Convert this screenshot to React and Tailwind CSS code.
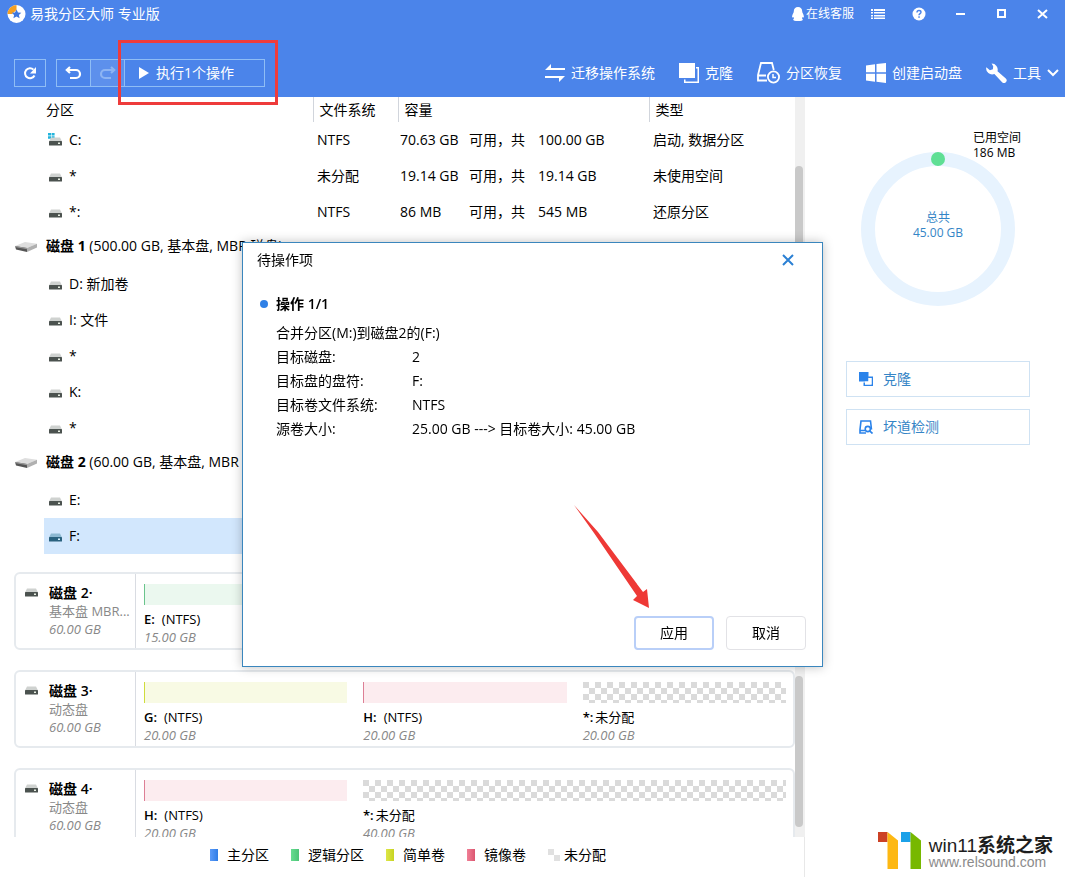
import { useState } from 'react'

const partitions = [
    { id: 'c', name: 'C:', system: true, fs: 'NTFS', free: '70.63 GB', total: '100.00 GB', type: '启动, 数据分区' },
    { id: 'u1', name: '*', fs: '未分配', free: '19.14 GB', total: '19.14 GB', type: '未使用空间' },
    { id: 'r1', name: '*:', fs: 'NTFS', free: '86 MB', total: '545 MB', type: '还原分区' },
    { id: 'disk1', disk: '磁盘 1', info: '(500.00 GB, 基本盘, MBR 磁盘)' },
    { id: 'd', name: 'D: 新加卷' },
    { id: 'i', name: 'I: 文件' },
    { id: 'u2', name: '*' },
    { id: 'k', name: 'K:' },
    { id: 'u3', name: '*' },
    { id: 'disk2', disk: '磁盘 2', info: '(60.00 GB, 基本盘, MBR 磁盘)' },
    { id: 'e', name: 'E:' },
    { id: 'f', name: 'F:' },
]

const disks = [
    {
        name: '磁盘 2·',
        kind: '基本盘 MBR...',
        size: '60.00 GB',
        parts: [
            { name: 'E:', label: '(NTFS)', size: '15.00 GB', grow: 15, tone: 'green' },
            { name: 'F:', label: '(NTFS)', size: '45.00 GB', grow: 45, tone: 'green' },
        ],
    },
    {
        name: '磁盘 3·',
        kind: '动态盘',
        size: '60.00 GB',
        parts: [
            { name: 'G:', label: '(NTFS)', size: '20.00 GB', grow: 20, tone: 'lime' },
            { name: 'H:', label: '(NTFS)', size: '20.00 GB', grow: 20, tone: 'pink' },
            { name: '*:', label: '未分配', size: '20.00 GB', grow: 20, tone: 'none' },
        ],
    },
    {
        name: '磁盘 4·',
        kind: '动态盘',
        size: '60.00 GB',
        parts: [
            { name: 'H:', label: '(NTFS)', size: '20.00 GB', grow: 203, tone: 'pink' },
            { name: '*:', label: '未分配', size: '40.00 GB', grow: 423, tone: 'none' },
        ],
    },
]

const tones = {
    green: 'border-l border-[#6ac48c] bg-[#ebf8ef]',
    lime: 'border-l border-[#cfdc3c] bg-[#f8fae4]',
    pink: 'border-l border-[#dd7f95] bg-[#fcecef]',
    none: 'bg-[repeating-conic-gradient(#ffffff_0_25%,#dadada_0_50%)] bg-size-[12px_12px]',
}

const legend = [
    { label: '主分区', swatch: 'w-2 bg-linear-to-r from-[#5b9bf8] to-[#2f7de6]' },
    { label: '逻辑分区', swatch: 'w-2 bg-linear-to-r from-[#66dc90] to-[#4cc477]' },
    { label: '简单卷', swatch: 'w-2 bg-linear-to-r from-[#dde646] to-[#c7d420]' },
    { label: '镜像卷', swatch: 'w-2 bg-linear-to-r from-[#f07f96] to-[#db5570]' },
]

const details = [
    ['目标磁盘:', '2'],
    ['目标盘的盘符:', 'F:'],
    ['目标卷文件系统:', 'NTFS'],
    ['源卷大小:', '25.00 GB ---> 目标卷大小: 45.00 GB'],
]

function DriveIcon({ system, selected }) {
    return (
        <svg width="15" height="14" viewBox="0 0 15 14" className="shrink-0">
            {system && (
                <path d="M0 0h3v2.6H0zM3.6 0h3v2.6h-3zM0 3.2h3v2.6H0zM3.6 3.2h3v2.6h-3z" fill="#22b4dc" />
            )}
            <path d="M3 4.5h9l2 4H1z" fill={selected ? '#8db9d2' : '#cfd2d0'} />
            <rect x="1" y="8" width="13" height="4.5" rx="0.6" fill={selected ? '#2a627f' : '#4b524f'} />
            <rect x="10" y="9.5" width="2" height="1.5" fill={selected ? '#d8f2ff' : '#e9f0e4'} />
        </svg>
    )
}

function DiskIcon() {
    return (
        <svg width="22" height="14" viewBox="0 0 22 14" className="shrink-0">
            <path d="M0 7 10 3l12 1.800L12 9z" fill="#dedede" />
            <path d="M0 7l12 2v4L1 10.500z" fill="#555" />
            <path d="M12 9l10-4.200V8.500L12 13z" fill="#b0b0b0" />
            <path d="M0 7l12 2v1.200L0 8z" fill="#9a9a9a" />
        </svg>
    )
}

function ToolButton({ icon, children, chevron }) {
    return (
        <button type="button" className="flex items-center gap-1.5 whitespace-nowrap text-sm text-white">
            {icon}
            <span>{children}</span>
            {chevron && (
                <svg width="12" height="8" viewBox="0 0 12 8" fill="none" stroke="currentColor" strokeWidth="2">
                    <path d="M1 1l5 5 5-5" />
                </svg>
            )}
        </button>
    )
}

function Header() {
    return (
        <header className="flex h-[97px] shrink-0 flex-col bg-[#4b84ea] text-white">
            {/* Title bar */}
            <div className="flex h-7 items-center justify-between pl-[7px] pr-4">
                <h1 className="flex items-center gap-1 text-sm">
                    <svg width="19" height="18" viewBox="0 0 19 18">
                        <circle cx="9.5" cy="9" r="9" fill="#fff" />
                        <path d="M0.5 9A9 9 0 0 1 9.5 0v5L5 9z" fill="#f6a021" />
                        <path
                            d="M9.5 4.5l1.5 2.9 3.3.4-2.4 2.2.7 3.3-3.1-1.7-3.1 1.7.7-3.3-2.4-2.2 3.3-.4z"
                            fill="#3f78e0"
                        />
                    </svg>
                    易我分区大师 专业版
                </h1>
                <div className="flex items-center">
                    <button type="button" className="mr-[17px] flex items-center gap-0.5 text-xs">
                        <svg width="12" height="14" viewBox="0 0 12 14" fill="currentColor">
                            <path d="M6 0C3.400 0 1.800 1.900 1.800 4.200c0 .8-.1 1.200-.6 2C.500 7.600 0 8.800.1 10c.1.700.6.700 1.300.1L2 11.500c-.500.300-.8.600-.8 1C1.200 13.600 3 14 6 14s4.800-.4 4.800-1.500c0-.4-.3-.7-.8-1l.6-1.400c.7.600 1.200.6 1.300-.1.1-1.200-.4-2.400-1.100-3.800-.5-.8-.6-1.200-.6-2C10.200 1.900 8.600 0 6 0z" />
                        </svg>
                        在线客服
                    </button>
                    <div className="flex items-center gap-[27px]">
                        <button type="button" aria-label="菜单">
                            <svg width="14" height="14" viewBox="0 0 14 14" fill="currentColor">
                                <path d="M0 2h2v2H0zM3 2h11v2H3zM0 5h2v1.500H0zM3 5h11v1.500H3zM0 8h2v1.500H0zM3 8h11v1.500H3zM0 10.500h2v1.500H0zM3 10.500h11v1.500H3z" />
                            </svg>
                        </button>
                        <button type="button" aria-label="帮助">
                            <svg width="14" height="14" viewBox="0 0 14 14">
                                <circle cx="7" cy="7" r="6.500" fill="#fff" />
                                <path
                                    d="M5 5.500C5 4.200 5.900 3.500 7 3.500s2 .7 2 1.700C9 6.600 7 6.600 7 8.200"
                                    fill="none"
                                    stroke="#4b84ea"
                                    strokeWidth="1.400"
                                />
                                <rect x="6.300" y="9.300" width="1.500" height="1.500" fill="#4b84ea" />
                            </svg>
                        </button>
                        <button type="button" aria-label="最小化">
                            <svg width="14" height="14" viewBox="0 0 14 14" fill="currentColor">
                                <rect x="3" y="6" width="9" height="2" />
                            </svg>
                        </button>
                        <button type="button" aria-label="最大化">
                            <svg width="14" height="14" viewBox="0 0 14 14" fill="none" stroke="currentColor" strokeWidth="2">
                                <rect x="4" y="3" width="7" height="7" />
                            </svg>
                        </button>
                        <button type="button" aria-label="关闭">
                            <svg width="14" height="14" viewBox="0 0 14 14" stroke="currentColor" strokeWidth="2">
                                <path d="M3 3l9 8M12 3l-9 8" />
                            </svg>
                        </button>
                    </div>
                </div>
            </div>

            {/* Toolbar */}
            <div className="mt-[31px] flex items-center justify-between pl-3.5 pr-1.5">
                <div className="flex items-center gap-2.5">
                    <button
                        type="button"
                        aria-label="刷新"
                        className="flex h-7 w-8 items-center justify-center border border-[#8fbdf5]"
                    >
                        <svg width="14" height="14" viewBox="0 0 14 14" fill="none" stroke="currentColor" strokeWidth="2">
                            <path d="M11.500 9.500A5 5 0 1 1 10.500 3.600" />
                            <path d="M13 1v6.500H7z" fill="currentColor" stroke="none" />
                        </svg>
                    </button>
                    <div className="relative flex h-7 border border-[#8fbdf5]">
                        <button
                            type="button"
                            aria-label="撤销"
                            className="flex w-[34px] items-center justify-center border-r border-[#8fbdf5]"
                        >
                            <svg width="17" height="14" viewBox="0 0 17 14" fill="none" stroke="currentColor" strokeWidth="2.200">
                                <path d="M5 1 1.800 4 5 7M2 4h9a4 4 0 0 1 0 8H5" />
                            </svg>
                        </button>
                        <button
                            type="button"
                            aria-label="重做"
                            disabled
                            className="flex w-[34px] items-center justify-center border-r border-[#8fbdf5] bg-white/10 text-[#8db4f3]"
                        >
                            <svg width="17" height="14" viewBox="0 0 17 14" fill="none" stroke="currentColor" strokeWidth="2.200">
                                <path d="M12 1l3.200 3L12 7M15 4H6a4 4 0 0 0 0 8h6" />
                            </svg>
                        </button>
                        <button type="button" className="flex w-[139px] items-center gap-[7px] whitespace-nowrap pl-3.5 text-sm">
                            <svg width="10" height="12" viewBox="0 0 10 12" fill="currentColor">
                                <path d="M0 0l10 6-10 6z" />
                            </svg>
                            执行1个操作
                        </button>
                        <div className="pointer-events-none absolute -right-3.5 -top-5 h-[65px] w-[160px] border-3 border-[#ee3b3b]" />
                    </div>
                </div>

                <div className="flex items-center gap-6">
                    <ToolButton
                        icon={
                            <svg width="20" height="20" viewBox="0 0 20 20" fill="currentColor">
                                <path d="M0 7 6 1v4h14v2zM20 13l-6 6v-4H0v-2z" />
                            </svg>
                        }
                    >
                        迁移操作系统
                    </ToolButton>
                    <ToolButton
                        icon={
                            <svg width="20" height="20" viewBox="0 0 20 20" fill="currentColor">
                                <path d="M0 0h16v15H0z" />
                                <path d="M17 4h3v16H5v-3.500h1.500v2H18.500V5.500H17z" />
                            </svg>
                        }
                    >
                        克隆
                    </ToolButton>
                    <ToolButton
                        icon={
                            <svg width="23" height="22" viewBox="0 0 23 22" fill="none" stroke="currentColor" strokeWidth="1.800">
                                <path d="M10 18.500H1V13L4 1h11l1.800 7M1 13.500h8" />
                                <circle cx="16.500" cy="15" r="5.600" />
                                <path d="M16 12v3.500h3" strokeWidth="1.500" />
                            </svg>
                        }
                    >
                        分区恢复
                    </ToolButton>
                    <ToolButton
                        icon={
                            <svg width="20" height="20" viewBox="0 0 20 20" fill="currentColor">
                                <path d="M0 2.500 9 1.300v8H0zM10.500 1.100 20 0v9.300h-9.500zM0 10.700h9v8l-9-1.200zM10.500 10.700H20V20l-9.500-1.200z" />
                            </svg>
                        }
                    >
                        创建启动盘
                    </ToolButton>
                    <ToolButton
                        chevron
                        icon={
                            <svg width="21" height="20" viewBox="0 0 21 20" fill="currentColor">
                                <path d="M5.600.6a6 6 0 0 1 5.900 7.600l8.300 7.200a2.600 2.600 0 0 1-3.700 3.800L8.400 11A6 6 0 0 1 .3 4.200l3.600 3 3-1L7.200 3.200z" />
                            </svg>
                        }
                    >
                        工具
                    </ToolButton>
                </div>
            </div>
        </header>
    )
}

function PartitionTable({ selected, onSelect }) {
    return (
        <section className="flex min-h-0 shrink-0 overflow-hidden">
            <table className="min-w-0 flex-1 table-fixed border-collapse text-left text-sm">
                <colgroup>
                    <col className="w-11" />
                    <col />
                    <col className="w-[85px]" />
                    <col className="w-[251px]" />
                    <col className="w-[146px]" />
                </colgroup>
                <thead>
                    <tr className="h-[25px]">
                        <th />
                        <th className="pl-0.5 font-normal">分区</th>
                        <th className="border-l border-gray-300 pl-1.5 font-normal">文件系统</th>
                        <th className="border-l border-gray-300 pl-1.5 font-normal">容量</th>
                        <th className="border-l border-gray-300 pl-1.5 font-normal">类型</th>
                    </tr>
                </thead>
                <tbody>
                    {partitions.map((p) =>
                        p.disk ? (
                            <tr key={p.id} className="h-9">
                                <td className="pb-1 pl-[15px]">
                                    <DiskIcon />
                                </td>
                                <td colSpan={4} className="whitespace-nowrap pb-1 pl-0.5">
                                    <b>{p.disk}</b> {p.info}
                                </td>
                            </tr>
                        ) : (
                            <tr key={p.id} className="h-9" onClick={() => onSelect(p.id)}>
                                <td />
                                <td className={selected === p.id ? 'bg-[#d2e7fd]' : ''}>
                                    <div className="flex items-center gap-1.5 pl-1">
                                        <DriveIcon system={p.system} selected={selected === p.id} />
                                        {p.name}
                                    </div>
                                </td>
                                <td className={`pl-1 ${selected === p.id ? 'bg-[#d2e7fd]' : ''}`}>{p.fs}</td>
                                <td className={selected === p.id ? 'bg-[#d2e7fd]' : ''}>
                                    {p.free && (
                                        <div className="flex pl-0.5">
                                            <span className="w-[69px]">{p.free}</span>
                                            <span className="w-[69px]">可用，共</span>
                                            <span>{p.total}</span>
                                        </div>
                                    )}
                                </td>
                                <td className={`pl-1 ${selected === p.id ? 'bg-[#d2e7fd]' : ''}`}>{p.type}</td>
                            </tr>
                        )
                    )}
                </tbody>
            </table>
            <div className="w-2.5 bg-[#f0f0f0] pt-[69px]">
                <div className="h-[300px] w-2 rounded-full bg-[#c9c9c9]" />
            </div>
        </section>
    )
}

function DiskMap() {
    return (
        <section className="flex min-h-0 flex-1 overflow-hidden">
            <div className="flex min-w-0 flex-1 flex-col gap-5 pl-3.5 pt-[18px]">
                {disks.map((d) => (
                    <div key={d.name} className="flex h-[78px] shrink-0 rounded-md border-2 border-[#e6eaee]">
                        <div className="flex w-[120px] shrink-0 border-r border-[#d9dce2] pl-2 pt-2.5">
                            <DriveIcon />
                            <div className="ml-2.5 whitespace-nowrap text-[13px] leading-[18px] text-[#888]">
                                <p className="text-sm leading-[18px] text-black">
                                    <b>{d.name.slice(0, 2)}</b> <span className="font-semibold">{d.name.slice(3)}</span>
                                </p>
                                <p>{d.kind}</p>
                                <p className="italic">{d.size}</p>
                            </div>
                        </div>
                        <div className="flex flex-1 gap-4 pl-2 pr-[7px] pt-2.5">
                            {d.parts.map((p) => (
                                <div key={p.name} className="min-w-0 basis-0" style={{ flexGrow: p.grow }}>
                                    <div className={`h-[21px] ${tones[p.tone]}`} />
                                    <p className="mt-[5px] text-[13px] leading-[18px]">
                                        <span className={`font-semibold ${p.tone === 'none' ? 'mr-0.5' : 'mr-[7px]'}`}>
                                            {p.name}
                                        </span>
                                        {p.label}
                                    </p>
                                    <p className="text-[13px] leading-[18px] italic text-[#888]">{p.size}</p>
                                </div>
                            ))}
                        </div>
                    </div>
                ))}
            </div>
            <div className="w-2.5 bg-[#f0f0f0] pb-2.5 pt-[122px]">
                <div className="h-full w-2 rounded-full bg-[#c9c9c9]" />
            </div>
        </section>
    )
}

function Legend() {
    return (
        <footer className="flex h-10 shrink-0 items-center justify-center gap-[22px] border-r border-[#e8e8e8] pb-1 pl-3 text-sm">
            {legend.map((l) => (
                <span key={l.label} className="flex items-center gap-[9px]">
                    <i className={`h-3 ${l.swatch}`} />
                    {l.label}
                </span>
            ))}
            <span className="flex items-center gap-1">
                <svg width="12" height="12" viewBox="0 0 12 12" fill="#e0e0e0">
                    <path d="M0 0h6v6H0zM6 6h6v6H6z" />
                </svg>
                未分配
            </span>
        </footer>
    )
}

function SidePanel() {
    return (
        <aside className="flex w-[260px] shrink-0 flex-col pl-[41px] pr-[35px] pt-[55px]">
            <div className="relative mx-auto">
                <svg width="154" height="154" viewBox="0 0 154 154" fill="none">
                    <circle cx="77" cy="77" r="70" stroke="#e7f3fe" strokeWidth="14" />
                    <circle cx="77" cy="7" r="7" fill="#5fdf94" />
                </svg>
                <p className="absolute inset-x-0 top-[58px] text-center text-xs leading-[15px] text-[#3585c6]">
                    总共
                    <br />
                    45.00 GB
                </p>
                <p className="absolute -top-[22px] left-28 whitespace-nowrap text-xs leading-[15px]">
                    已用空间
                    <br />
                    186 MB
                </p>
            </div>
            <div className="mt-[55px] flex flex-col gap-3 text-sm text-[#3585c6]">
                <button type="button" className="flex h-9 items-center gap-2.5 border border-[#cfe2f3] pl-3">
                    <svg width="14" height="14" viewBox="0 0 14 14" fill="#2b83ea">
                        <path d="M0 0h9.500v9.500H0z" />
                        <path d="M4.500 4.500H14V14H4.500v-3.500H6v2h6.500V6H10z" />
                        <path d="M8.300 6h4.200v6.500H6v-3h3.500V6z" fill="#fff" />
                    </svg>
                    克隆
                </button>
                <button type="button" className="flex h-9 items-center gap-2.5 border border-[#cfe2f3] pl-3">
                    <svg width="14" height="14" viewBox="0 0 14 14" fill="none" stroke="#2b83ea" strokeWidth="1.600">
                        <path d="M7 13H1V9.500L2 1h9.500l1 8.500M1 10.500h5" />
                        <circle cx="8.800" cy="9" r="2.600" />
                        <path d="M10.600 10.900l2.900 2.600" />
                    </svg>
                    坏道检测
                </button>
            </div>

            {/* Site mark */}
            <div className="-mr-[23px] mb-2 mt-auto flex items-end justify-end gap-2">
                <svg width="43" height="37" viewBox="0 0 43 37" className="shrink-0">
                    <path d="M0 0h9.500v10H0z" fill="#cc4125" />
                    <path d="M9.500 0 20 8.500V37H9.500z" fill="#fdb813" />
                    <path d="M23 0h9.500v10H23z" fill="#1ba1e8" />
                    <path d="M32.500 0 43 8.500V37H32.500z" fill="#77b800" />
                </svg>
                <div className="whitespace-nowrap font-['Liberation_Sans','Noto_Sans_CJK_SC',sans-serif]">
                    <p className="text-[19px] leading-[18px] text-[#1d1d1d]">
                        win11<b>系统之家</b>
                    </p>
                    <p className="text-sm leading-[14px] text-[#8b8b8b]">www.relsound.com</p>
                </div>
            </div>
        </aside>
    )
}

function PendingDialog({ onClose }) {
    return (
        <div className="fixed inset-0 flex items-center justify-center pt-8">
            <div
                role="dialog"
                aria-labelledby="pending-title"
                className="relative flex min-h-[425px] w-[581px] flex-col border border-[#3a86bd] bg-white shadow-[0_0_10px_rgba(0,0,0,0.25)]"
            >
                <div className="flex h-[34px] items-center justify-between pl-3.5 pr-7">
                    <h2 id="pending-title" className="text-sm">
                        待操作项
                    </h2>
                    <button type="button" aria-label="关闭" onClick={onClose}>
                        <svg width="12" height="12" viewBox="0 0 12 12" stroke="#2b80d4" strokeWidth="2">
                            <path d="M1 1l10 10M11 1 1 11" />
                        </svg>
                    </button>
                </div>
                <div className="mt-[15px] flex-1 pl-[17px]">
                    <h3 className="flex items-center gap-2 text-sm leading-6 font-bold">
                        <i className="size-2 rounded-full bg-[#2f80e6]" />
                        <span>
                            操作 <span className="font-semibold">1/1</span>
                        </span>
                    </h3>
                    <p className="mt-[5px] pl-4 text-sm leading-6">合并分区(M:)到磁盘2的(F:)</p>
                    <dl className="grid grid-cols-[136px_1fr] pl-4 text-sm leading-6">
                        {details.map(([k, v]) => (
                            <div key={k} className="contents">
                                <dt>{k}</dt>
                                <dd>{v}</dd>
                            </div>
                        ))}
                    </dl>
                </div>
                <div className="flex justify-end gap-3 pb-4 pr-4 text-sm">
                    <button type="button" className="h-[34px] w-20 rounded-sm border-2 border-[#b9cff8] bg-white">
                        应用
                    </button>
                    <button
                        type="button"
                        onClick={onClose}
                        className="h-[34px] w-20 rounded-sm border border-[#e2e2e6] bg-white"
                    >
                        取消
                    </button>
                </div>
                <svg
                    width="76"
                    height="104"
                    viewBox="0 0 76 104"
                    className="pointer-events-none absolute bottom-[57px] right-[172px]"
                >
                    <path d="M0 0 24 27 69 87 73 84 75 103 59 95 63 91 20 28z" fill="#ee3936" />
                </svg>
            </div>
        </div>
    )
}

function App() {
    const [selected, setSelected] = useState('f')
    const [dialogOpen, setDialogOpen] = useState(true)

    return (
        <div className="flex h-screen flex-col overflow-hidden bg-white font-['Open_Sans','Noto_Sans_CJK_SC',sans-serif] text-black">
            <Header />
            <div className="flex min-h-0 flex-1">
                <main className="flex min-w-0 flex-1 flex-col">
                    <PartitionTable selected={selected} onSelect={setSelected} />
                    <DiskMap />
                    <Legend />
                </main>
                <SidePanel />
            </div>
            {dialogOpen && <PendingDialog onClose={() => setDialogOpen(false)} />}
        </div>
    )
}

export default App
